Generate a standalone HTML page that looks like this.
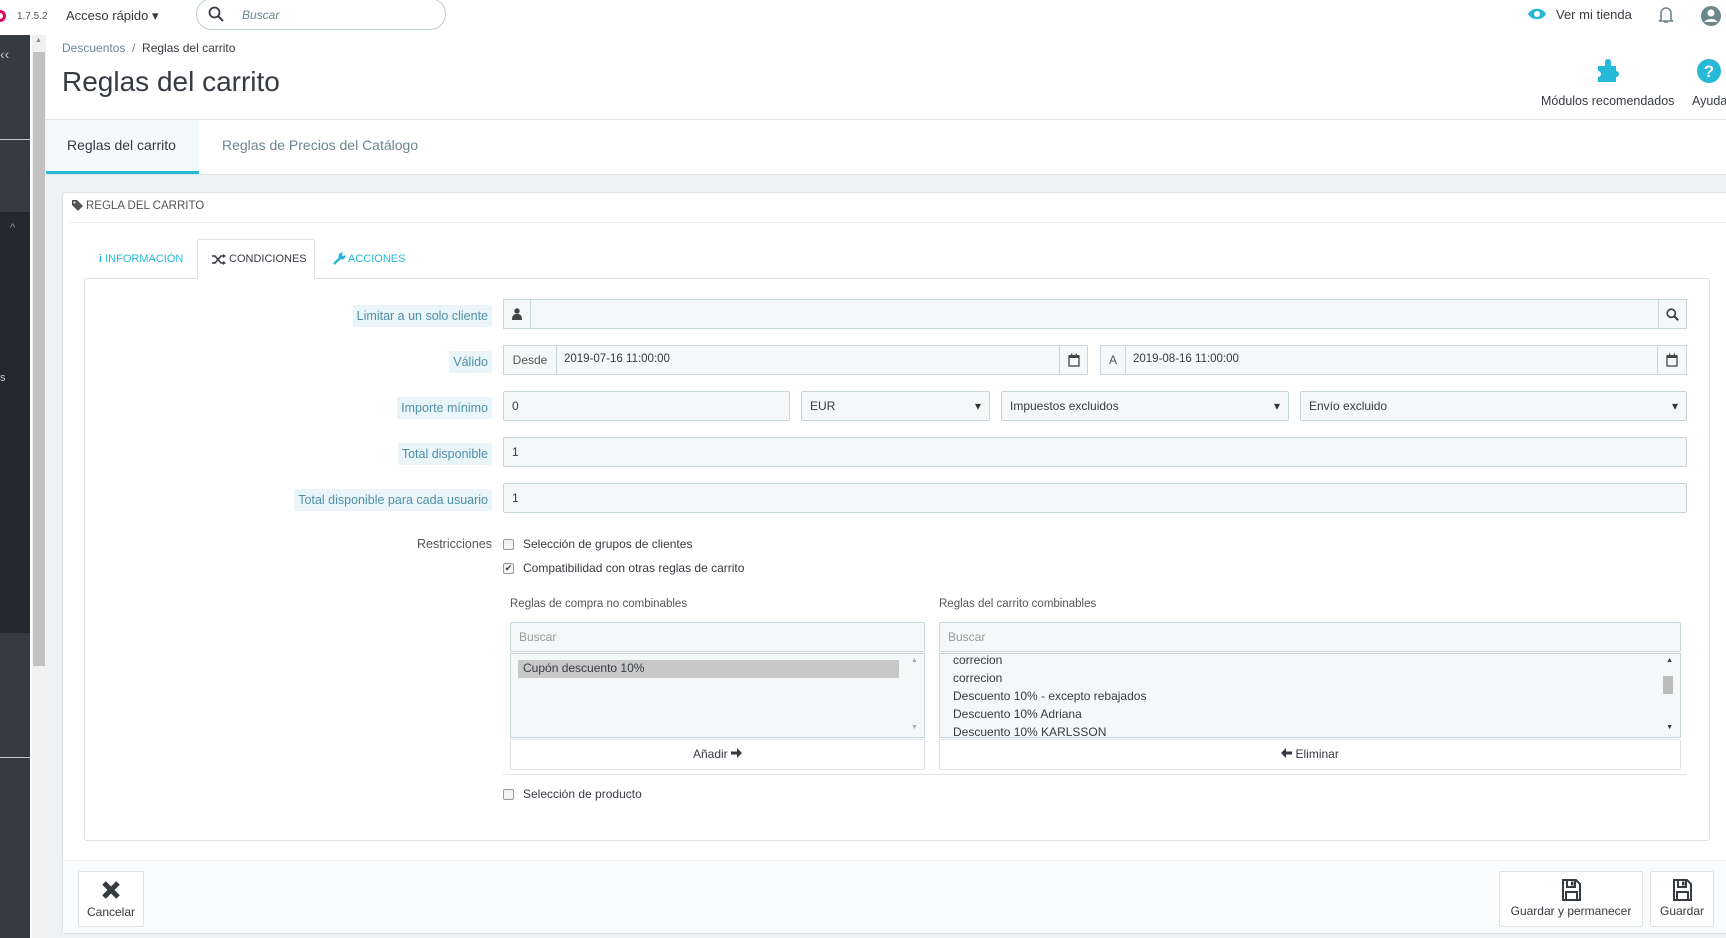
<!DOCTYPE html>
<html><head><meta charset="utf-8"><style>
*{box-sizing:border-box;margin:0;padding:0}
body{width:1726px;height:938px;overflow:hidden;background:#eff1f2;font-family:"Liberation Sans",sans-serif;color:#363a41;position:relative;font-size:13px}
.a{position:absolute}
.inp{position:absolute;background:#f5f8f9;border:1px solid #c7d6db;border-radius:2px;height:30px;font-size:12px;color:#363a41;padding:0 8px;line-height:28px;white-space:nowrap}
.add{position:absolute;background:#f5f8f9;border:1px solid #c7d6db;height:30px;font-size:12px;line-height:28px;text-align:center;color:#555}
.lbl{position:absolute;right:1234px;font-size:12.5px;color:#4f8fa6;background:#eaf5f9;padding:2px 4px;line-height:18px;white-space:nowrap}
.sel::after{content:"▾";position:absolute;right:8px;top:0;font-size:12px;color:#333}
.cb{position:absolute;width:11px;height:11px;border:1px solid #999;border-radius:2px;background:#f3f3f3}
.t{position:absolute;font-size:12px;color:#363a41;white-space:nowrap}
.btn{position:absolute;background:#fff;border:1px solid #dde3e5;border-radius:2px;text-align:center;font-size:12px;color:#363a41}
</style></head><body>
<svg width="0" height="0" style="position:absolute"><defs>
<symbol id="cal" viewBox="0 0 12 14"><rect x="1" y="3" width="10" height="10" fill="none" stroke="#444" stroke-width="1.3"/><rect x="1" y="2" width="10" height="3" fill="#444"/><rect x="3" y="0.5" width="1.3" height="3" fill="#444"/><rect x="7.7" y="0.5" width="1.3" height="3" fill="#444"/></symbol>
<symbol id="fl" viewBox="0 0 20 22"><path d="M2 1h13l4 4v16H2z" fill="none" stroke="#363a41" stroke-width="2"/><rect x="6" y="1" width="8" height="7" fill="none" stroke="#363a41" stroke-width="2"/><rect x="10" y="2.5" width="2.5" height="4" fill="#363a41"/><rect x="5" y="13" width="11" height="8" fill="none" stroke="#363a41" stroke-width="2"/></symbol>
</defs></svg>
<!-- top bar -->
<div class="a" style="left:0;top:0;width:1726px;height:35px;background:#fff"></div>
<div class="a" style="left:-6px;top:10px;width:12px;height:12px;border:3px solid #df0067;border-radius:50%"></div>
<div class="t" style="left:17px;top:11px;font-size:10px;color:#555">1.7.5.2</div>
<div class="t" style="left:66px;top:8px;font-size:13px">Acceso rápido ▾</div>
<div class="a" style="left:196px;top:-2px;width:250px;height:32px;border:1px solid #bbcdd2;border-radius:16px"></div>
<svg class="a" style="left:208px;top:6px" width="16" height="16" viewBox="0 0 16 16"><circle cx="6.5" cy="6.5" r="5" fill="none" stroke="#363a41" stroke-width="1.8"/><path d="M10 10l5 5" stroke="#363a41" stroke-width="2"/></svg>
<div class="t" style="left:242px;top:8px;font-size:12px;font-style:italic;color:#6c868e">Buscar</div>
<svg class="a" style="left:1527px;top:7px" width="20" height="14" viewBox="0 0 20 14"><path d="M1 7C5 0 15 0 19 7C15 14 5 14 1 7Z" fill="#25b9d7"/><circle cx="10" cy="7" r="3" fill="#fff"/></svg>
<div class="t" style="left:1556px;top:7px;font-size:13px">Ver mi tienda</div>
<svg class="a" style="left:1658px;top:5px" width="16" height="20" viewBox="0 0 16 20"><path d="M3 15V8a5 5 0 0 1 10 0v7l2 1H1z" fill="none" stroke="#6c868e" stroke-width="1.6"/><path d="M6 17h4" stroke="#6c868e" stroke-width="1.6"/></svg>
<svg class="a" style="left:1700px;top:5px" width="22" height="22" viewBox="0 0 22 22"><circle cx="11" cy="11" r="10" fill="#6c868e"/><circle cx="11" cy="8" r="3.5" fill="#fff"/><path d="M4.5 17c2-4 11-4 13 0" fill="#fff"/></svg>
<!-- sidebar -->
<div class="a" style="left:0;top:35px;width:30px;height:903px;background:#363a41"></div>
<div class="a" style="left:0;top:212px;width:30px;height:421px;background:#25282d"></div>
<div class="a" style="left:0;top:139px;width:30px;height:1px;background:#bbcdd2"></div>
<div class="a" style="left:0;top:757px;width:30px;height:1px;background:#bbcdd2"></div>
<div class="t" style="left:0;top:46px;color:#ccc;font-size:14px">‹‹</div>
<div class="t" style="left:10px;top:222px;color:#8a9399;font-size:11px">^</div>
<div class="t" style="left:0;top:372px;color:#ccc;font-size:11px">s</div>
<div class="a" style="left:30px;top:35px;width:2px;height:903px;background:#fff"></div>
<div class="a" style="left:32px;top:35px;width:14px;height:903px;background:#f1f1f1"></div>
<div class="a" style="left:33px;top:52px;width:12px;height:614px;background:#c1c1c1"></div>
<div class="t" style="left:35px;top:37px;font-size:7px;color:#888">▲</div>
<!-- header -->
<div class="a" style="left:46px;top:35px;width:1680px;height:139px;background:#fff"></div>
<div class="a" style="left:46px;top:119px;width:1680px;height:1px;background:#dfe3e5"></div>
<div class="t" style="left:62px;top:41px;font-size:12px;color:#6c868e">Descuentos &nbsp;/&nbsp; <span style="color:#363a41">Reglas del carrito</span></div>
<div class="t" style="left:62px;top:66px;font-size:28px">Reglas del carrito</div>
<svg class="a" style="left:1596px;top:58px" width="26" height="26" viewBox="0 0 26 26"><path d="M2 8h7V4a3 3 0 0 1 6 0v4h5v5a3 3 0 0 1 0 6v5H2v-5a3 3 0 0 0 0-6z" fill="#25b9d7"/></svg>
<div class="t" style="left:1541px;top:94px;font-size:12.5px">Módulos recomendados</div>
<svg class="a" style="left:1696px;top:58px" width="26" height="26" viewBox="0 0 26 26"><circle cx="13" cy="13" r="12" fill="#25b9d7"/><text x="13" y="19" text-anchor="middle" font-family="Liberation Sans" font-weight="bold" font-size="17" fill="#fff">?</text></svg>
<div class="t" style="left:1692px;top:94px;font-size:12.5px">Ayuda</div>
<div class="a" style="left:46px;top:120px;width:153px;height:54px;background:#f4f9fb"></div>
<div class="a" style="left:46px;top:171px;width:153px;height:3px;background:#25b9d7"></div>
<div class="t" style="left:67px;top:137px;font-size:14px">Reglas del carrito</div>
<div class="t" style="left:222px;top:137px;font-size:14px;color:#6c868e">Reglas de Precios del Catálogo</div>
<div class="a" style="left:46px;top:174px;width:1680px;height:1px;background:#dfe3e5"></div>
<!-- panel -->
<div class="a" style="left:62px;top:192px;width:1670px;height:742px;background:#fff;border:1px solid #dde3e5;border-radius:4px"></div>
<div class="a" style="left:70px;top:222px;width:1656px;height:1px;background:#eee"></div>
<svg class="a" style="left:72px;top:200px" width="11" height="11" viewBox="0 0 11 11"><path d="M0 0h5l6 6-5 5-6-6z" fill="#555"/><circle cx="2.5" cy="2.5" r="1" fill="#fff"/></svg>
<div class="t" style="left:86px;top:200px;font-size:11.5px;color:#555">REGLA DEL CARRITO</div>
<!-- inner tabs -->
<div class="a" style="left:84px;top:278px;width:1626px;height:563px;border:1px solid #dde3e5;border-radius:3px"></div>
<div class="a" style="left:197px;top:239px;width:118px;height:40px;background:#fff;border:1px solid #dde3e5;border-bottom:none;border-radius:3px 3px 0 0"></div>
<div class="t" style="left:99px;top:253px;font-size:11px;color:#25b9d7"><b>i</b> INFORMACIÓN</div>
<svg class="a" style="left:212px;top:254px" width="14" height="11" viewBox="0 0 14 11"><path d="M0 2h3l6 7h3M0 9h3l6-7h3" fill="none" stroke="#363a41" stroke-width="1.6"/><path d="M11 0l3 2-3 2zM11 7l3 2-3 2z" fill="#363a41"/></svg>
<div class="t" style="left:229px;top:253px;font-size:11px;color:#363a41">CONDICIONES</div>
<svg class="a" style="left:333px;top:252px" width="13" height="13" viewBox="0 0 13 13"><path d="M1 12l6-6" stroke="#25b9d7" stroke-width="2.5"/><circle cx="9" cy="4" r="3.5" fill="#25b9d7"/><circle cx="10.5" cy="2.5" r="1.5" fill="#fff"/></svg>
<div class="t" style="left:348px;top:253px;font-size:11px;color:#25b9d7">ACCIONES</div>
<!-- rows -->
<div class="lbl" style="top:305px">Limitar a un solo cliente</div>
<div class="inp" style="left:503px;top:299px;width:1184px"></div>
<div class="add" style="left:503px;top:299px;width:28px"><svg width="10" height="12" viewBox="0 0 10 12" style="margin-top:8px"><circle cx="5" cy="3" r="2.7" fill="#444"/><path d="M0 12c0-5 2-6 5-6s5 1 5 6z" fill="#444"/></svg></div>
<div class="add" style="left:1658px;top:299px;width:29px"><svg width="13" height="13" viewBox="0 0 16 16" style="margin-top:8px"><circle cx="6.5" cy="6.5" r="5" fill="none" stroke="#363a41" stroke-width="2"/><path d="M10 10l5 5" stroke="#363a41" stroke-width="2.4"/></svg></div>

<div class="lbl" style="top:351px">Válido</div>
<div class="inp" style="left:503px;top:345px;width:585px"></div>
<div class="add" style="left:503px;top:345px;width:54px">Desde</div>
<div class="t" style="left:564px;top:353px;font-size:11.5px">2019-07-16 11:00:00</div>
<div class="add" style="left:1059px;top:345px;width:29px"><svg width="12" height="14" style="margin-top:7px"><use href="#cal"/></svg></div>
<div class="inp" style="left:1100px;top:345px;width:587px"></div>
<div class="add" style="left:1100px;top:345px;width:26px">A</div>
<div class="t" style="left:1133px;top:353px;font-size:11.5px">2019-08-16 11:00:00</div>
<div class="add" style="left:1657px;top:345px;width:30px"><svg width="12" height="14" style="margin-top:7px"><use href="#cal"/></svg></div>

<div class="lbl" style="top:397px">Importe mínimo</div>
<div class="inp" style="left:503px;top:391px;width:287px">0</div>
<div class="inp sel" style="left:801px;top:391px;width:189px">EUR</div>
<div class="inp sel" style="left:1001px;top:391px;width:288px">Impuestos excluidos</div>
<div class="inp sel" style="left:1300px;top:391px;width:387px">Envío excluido</div>

<div class="lbl" style="top:443px">Total disponible</div>
<div class="inp" style="left:503px;top:437px;width:1184px">1</div>
<div class="lbl" style="top:489px">Total disponible para cada usuario</div>
<div class="inp" style="left:503px;top:483px;width:1184px">1</div>

<div class="t" style="right:1234px;top:537px;font-size:12.5px;color:#555">Restricciones</div>
<div class="cb" style="left:503px;top:539px"></div>
<div class="t" style="left:523px;top:537px">Selección de grupos de clientes</div>
<div class="cb" style="left:503px;top:563px;font-size:9px;line-height:9px;text-align:center">✔</div>
<div class="t" style="left:523px;top:561px">Compatibilidad con otras reglas de carrito</div>

<div class="t" style="left:510px;top:598px;font-size:11.5px;color:#555">Reglas de compra no combinables</div>
<div class="t" style="left:939px;top:598px;font-size:11.5px;color:#555">Reglas del carrito combinables</div>
<div class="inp" style="left:510px;top:622px;width:415px;color:#999">Buscar</div>
<div class="inp" style="left:939px;top:622px;width:742px;color:#999">Buscar</div>
<div class="a" style="left:510px;top:653px;width:415px;height:85px;background:#f5f8f9;border:1px solid #c7d6db"></div>
<div class="a" style="left:518px;top:660px;width:381px;height:18px;background:#c8c8c8"></div>
<div class="t" style="left:523px;top:661px;font-size:12px">Cupón descuento 10%</div>
<div class="t" style="left:911px;top:657px;font-size:7px;color:#aaa">▲</div>
<div class="t" style="left:911px;top:724px;font-size:7px;color:#aaa">▼</div>
<div class="a" style="left:939px;top:653px;width:742px;height:85px;background:#f5f8f9;border:1px solid #c7d6db;overflow:hidden">
<div style="position:absolute;left:13px;top:-3px;font-size:12px;line-height:18px;color:#363a41">correcion<br>correcion<br>Descuento 10% - excepto rebajados<br>Descuento 10% Adriana<br>Descuento 10% KARLSSON</div>
<div style="position:absolute;right:7px;top:22px;width:10px;height:18px;background:#bbb"></div>
<div style="position:absolute;right:7px;top:3px;font-size:7px;color:#333">▲</div>
<div style="position:absolute;right:7px;top:70px;font-size:7px;color:#333">▼</div>
</div>
<div class="btn" style="left:510px;top:739px;width:415px;height:31px;line-height:29px">Añadir <svg width="11" height="10" viewBox="0 0 11 10"><path d="M0 3.5h6V0l5 5-5 5V6.5H0z" fill="#363a41"/></svg></div>
<div class="btn" style="left:939px;top:739px;width:742px;height:31px;line-height:29px"><svg width="11" height="10" viewBox="0 0 11 10"><path d="M11 3.5H5V0L0 5l5 5V6.5h6z" fill="#363a41"/></svg> Eliminar</div>
<div class="a" style="left:503px;top:774px;width:1184px;height:1px;background:#e5e5e5"></div>
<div class="cb" style="left:503px;top:789px"></div>
<div class="t" style="left:523px;top:787px">Selección de producto</div>
<!-- footer -->
<div class="a" style="left:63px;top:860px;width:1663px;height:73px;background:#fafbfc;border-top:1px solid #eee"></div>
<div class="btn" style="left:78px;top:871px;width:66px;height:56px"><svg width="20" height="20" viewBox="0 0 20 20" style="margin-top:8px"><path d="M3 3l14 14M17 3L3 17" stroke="#363a41" stroke-width="5"/></svg><div style="margin-top:2px">Cancelar</div></div>
<div class="btn" style="left:1499px;top:871px;width:144px;height:56px"><svg width="20" height="22" style="margin-top:7px"><use href="#fl"/></svg><div>Guardar y permanecer</div></div>
<div class="btn" style="left:1650px;top:871px;width:64px;height:56px"><svg width="20" height="22" style="margin-top:7px"><use href="#fl"/></svg><div>Guardar</div></div>
</body></html>
